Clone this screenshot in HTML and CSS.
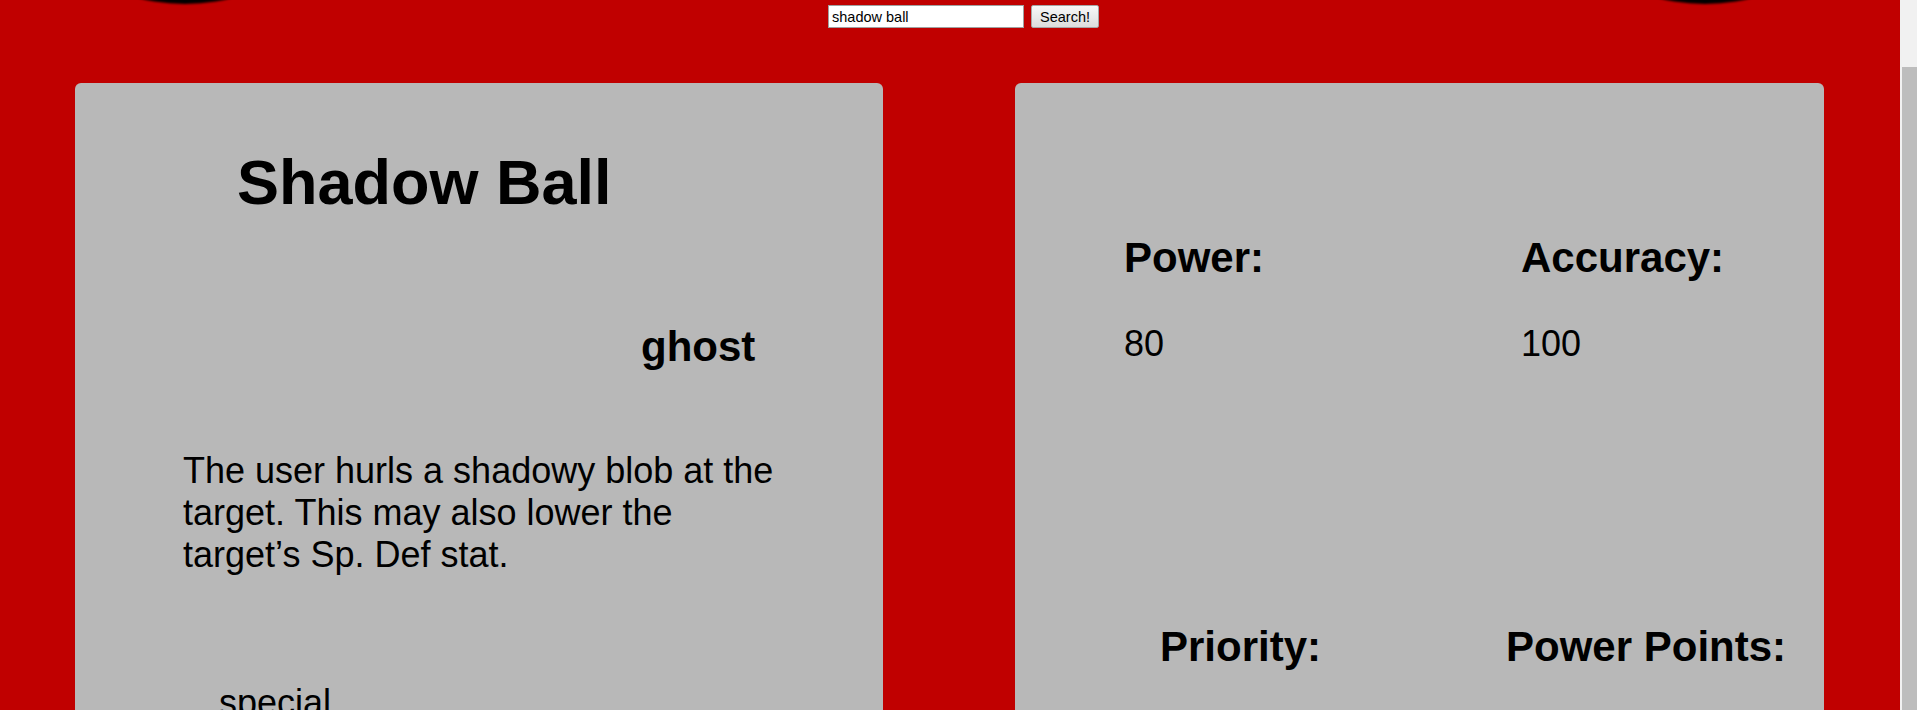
FILE: index.html
```html
<!DOCTYPE html>
<html lang="en">
<head>
<meta charset="utf-8">
<title>Shadow Ball</title>
<link rel="stylesheet" href="styles.css">
</head>
<body>
<header class="top">
  <div class="ball ball-left"></div>
  <form class="search" onsubmit="return false">
    <input class="search-input" type="text" value="shadow ball">
    <button class="search-btn" type="submit">Search!</button>
  </form>
  <div class="ball ball-right"></div>
</header>
<main class="cards">
  <section class="card card-info">
    <h1 class="move-name">Shadow Ball</h1>
    <h2 class="move-type">ghost</h2>
    <p class="move-desc">The user hurls a shadowy blob at the target. This may also lower the target’s Sp. Def stat.</p>
    <p class="move-class">special</p>
  </section>
  <section class="card card-stats">
    <div class="stat-row row-one">
      <div class="stat">
        <h2 class="stat-label">Power:</h2>
        <p class="stat-value">80</p>
      </div>
      <div class="stat">
        <h2 class="stat-label">Accuracy:</h2>
        <p class="stat-value">100</p>
      </div>
    </div>
    <div class="stat-row row-two">
      <div class="stat">
        <h2 class="stat-label">Priority:</h2>
        <p class="stat-value">0</p>
      </div>
      <div class="stat">
        <h2 class="stat-label">Power Points:</h2>
        <p class="stat-value">15</p>
      </div>
    </div>
  </section>
</main>
<div class="scrollbar" aria-hidden="true"><div class="scrollbar-thumb"></div></div>
</body>
</html>
```
FILE: styles.css
```css
html {
  overflow-y: scroll;
}
body {
  margin: 0;
  background: #c00000;
  font-family: "Liberation Sans", Arial, sans-serif;
  color: #000;
}
.top {
  display: flex;
  align-items: flex-start;
  height: 28px;
  padding-left: 105px;
}
.ball {
  width: 160px;
  height: 64px;
  margin-top: -60px;
  border-radius: 50%;
  background: #000;
  filter: blur(0.8px);
  flex: none;
}
.search {
  display: flex;
  gap: 7px;
  margin: 5px 0 0 563px;
}
.search-input {
  box-sizing: border-box;
  width: 196px;
  height: 23px;
  margin: 0;
  padding: 0 3px;
  border: 1px solid #a0a0a0;
  background: #fff;
  font-family: "Liberation Sans", Arial, sans-serif;
  font-size: 14.5px;
  color: #000;
}
.search-btn {
  box-sizing: border-box;
  width: 68px;
  height: 23px;
  margin: 0;
  padding: 0;
  border: 1px solid #a6a6a6;
  border-radius: 2px;
  background: linear-gradient(#f7f7f7, #dddddd);
  font-family: "Liberation Sans", Arial, sans-serif;
  font-size: 14.5px;
  color: #000;
}
.ball-right {
  margin-left: 526px;
}
.cards {
  display: flex;
  gap: 132px;
  padding: 55px 76px 40px 75px;
}
.card {
  box-sizing: border-box;
  width: 808px;
  min-height: 900px;
  background: #b8b8b8;
  border-radius: 6px;
  flex: none;
}
.card-info {
  padding-top: 63px;
}
.move-name {
  margin: 0 0 0 162px;
  font-size: 63px;
  line-height: 72px;
  font-weight: bold;
}
.move-type {
  margin: 105px 0 0 566px;
  font-size: 42px;
  line-height: 48px;
  font-weight: bold;
}
.move-desc {
  width: 600px;
  margin: 79px 0 0 108px;
  font-size: 36px;
  line-height: 42px;
}
.move-class {
  margin: 106px 0 0 144px;
  font-size: 36px;
  line-height: 42px;
}
.card-stats {
  width: 809px;
  padding-top: 151px;
}
.stat-row {
  display: grid;
}
.row-one {
  grid-template-columns: 397px auto;
  padding-left: 109px;
}
.row-two {
  grid-template-columns: 346px auto;
  padding-left: 145px;
  margin-top: 258px;
}
.stat-label {
  margin: 0 0 41px;
  font-size: 42px;
  line-height: 48px;
  font-weight: bold;
}
.stat-value {
  margin: 0;
  font-size: 36px;
  line-height: 42px;
}
.scrollbar {
  position: fixed;
  top: 0;
  right: 0;
  width: 17px;
  height: 100%;
  background: #f1f1f1;
  display: flex;
  flex-direction: column;
  padding: 67px 0 0 2px;
  box-sizing: border-box;
}
.scrollbar-thumb {
  flex: 1;
  background: #bdbdbd;
}
```
